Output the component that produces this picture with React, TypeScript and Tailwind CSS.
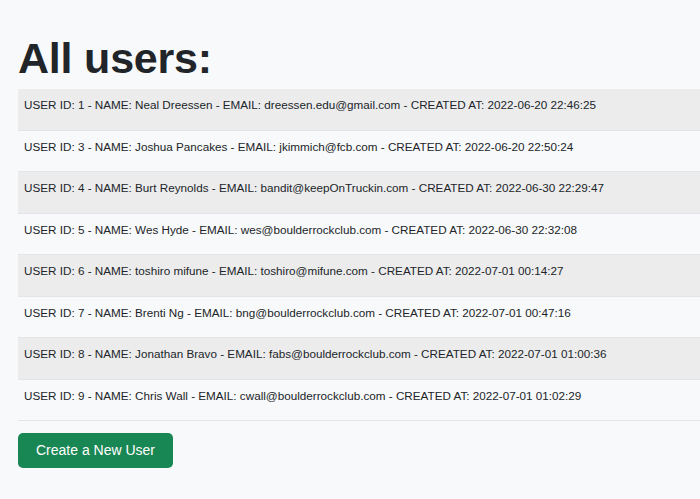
const users = [
  { id: 1, name: "Neal Dreessen", email: "dreessen.edu@gmail.com", created: "2022-06-20 22:46:25" },
  { id: 3, name: "Joshua Pancakes", email: "jkimmich@fcb.com", created: "2022-06-20 22:50:24" },
  { id: 4, name: "Burt Reynolds", email: "bandit@keepOnTruckin.com", created: "2022-06-30 22:29:47" },
  { id: 5, name: "Wes Hyde", email: "wes@boulderrockclub.com", created: "2022-06-30 22:32:08" },
  { id: 6, name: "toshiro mifune", email: "toshiro@mifune.com", created: "2022-07-01 00:14:27" },
  { id: 7, name: "Brenti Ng", email: "bng@boulderrockclub.com", created: "2022-07-01 00:47:16" },
  { id: 8, name: "Jonathan Bravo", email: "fabs@boulderrockclub.com", created: "2022-07-01 01:00:36" },
  { id: 9, name: "Chris Wall", email: "cwall@boulderrockclub.com", created: "2022-07-01 01:02:29" },
];

export default function App() {
  return (
    <div
      className="min-h-[499px] w-[700px] overflow-hidden bg-[#f8f9fa] text-[#212529]"
      style={{ fontFamily: '"Liberation Sans", Arial, sans-serif' }}
    >
      <div className="pl-[18px] pt-[33px]">
        <h1 className="text-[43px] font-bold leading-[50px] tracking-[-0.2px]">All users:</h1>
        <div className="mt-[6px] w-[720px]">
          {users.map((u, i) => (
            <div
              key={u.id}
              className={`h-[41.5px] border-b border-[#e3e5e8] px-[6px] pt-[7px] text-[11.7px] leading-[18px] ${
                i % 2 === 0 ? "bg-[#ececed]" : "bg-[#f8f9fa]"
              }`}
            >
              USER ID: {u.id} - NAME: {u.name} - EMAIL: {u.email} - CREATED AT: {u.created}
            </div>
          ))}
        </div>
        <button className="mt-[12px] h-[35px] w-[155px] rounded-[5px] bg-[#198754] text-[14px] text-white">
          Create a New User
        </button>
      </div>
    </div>
  );
}
